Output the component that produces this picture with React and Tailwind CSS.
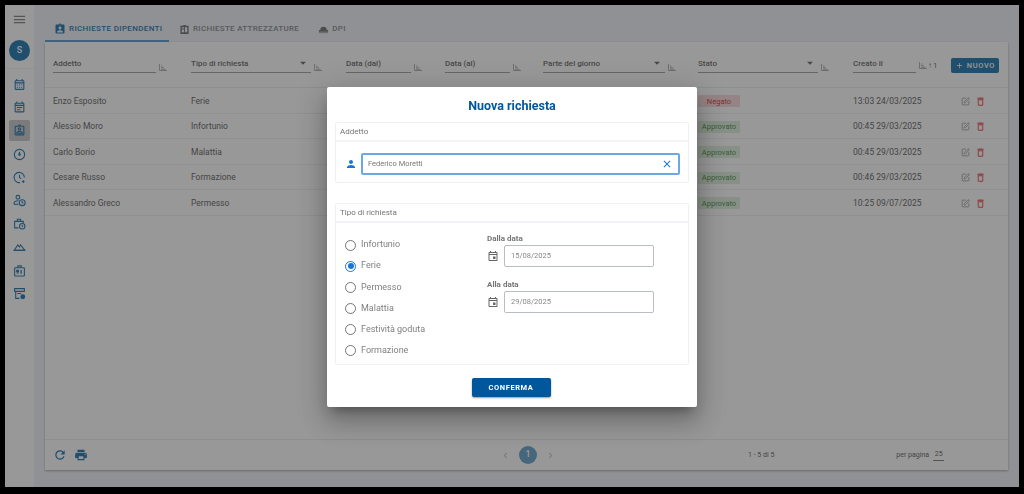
import {
  MdMenu, MdAssignmentInd, MdOutlineCalendarMonth, MdOutlineEventNote,
  MdOutlineAssignmentInd, MdAdd, MdOutlineDelete, MdRefresh, MdPrint, MdPerson,
  MdClose, MdOutlineEvent, MdChevronLeft, MdChevronRight, MdArrowDropDown,
} from 'react-icons/md';
import { SquarePen } from 'lucide-react';

const rows = [
  { name: 'Enzo Esposito', type: 'Ferie', state: 'Negato', created: '13:03 24/03/2025' },
  { name: 'Alessio Moro', type: 'Infortunio', state: 'Approvato', created: '00:45 29/03/2025' },
  { name: 'Carlo Borio', type: 'Malattia', state: 'Approvato', created: '00:45 29/03/2025' },
  { name: 'Cesare Russo', type: 'Formazione', state: 'Approvato', created: '00:46 29/03/2025' },
  { name: 'Alessandro Greco', type: 'Permesso', state: 'Approvato', created: '10:25 09/07/2025' },
];

const radios = ['Infortunio', 'Ferie', 'Permesso', 'Malattia', 'Festività goduta', 'Formazione'];

const SortIcon = () => (
  <svg width="8" height="8" viewBox="0 0 8 8" className="shrink-0 text-[#8a8a8a] mb-[2px]">
    <path d="M0.5 1v6.5H8M2 3h1.5M2 4.7h3M2 6.3h4.5" stroke="currentColor" strokeWidth="0.7" fill="none" />
  </svg>
);

// sidebar icons that the packages don't have in this form
const Svg = ({ className, children }) => (
  <svg viewBox="0 0 24 24" fill="none" stroke="currentColor" strokeWidth="2" className={className}>{children}</svg>
);
const ClockDot = (p) => <Svg {...p}><circle cx="12" cy="12" r="9.5" /><path d="M12 7v5" /><circle cx="12" cy="12" r="1.5" fill="currentColor" /></Svg>;
const ClockPlus = (p) => <Svg {...p}><path d="M21 12a9.5 9.5 0 1 0-8 9.4" /><path d="M12 7v5l3 2M19 17v5M16.5 19.5h5" /></Svg>;
const PersonClock = (p) => <Svg {...p}><circle cx="9" cy="6" r="3.5" /><path d="M2 19v-2c0-3 4-4.5 8-4.5" /><path d="M2 19h8" /><circle cx="17" cy="16" r="5.5" /><path d="M17 13v3l2 1" /></Svg>;
const CaseClock = (p) => <Svg {...p}><path d="M10 20H3V8h16v3M8 8V4h6v4" /><circle cx="17" cy="17" r="5" /><path d="M17 14.5V17l1.5 1" /></Svg>;
const Hill = (p) => <Svg {...p}><path d="M2 19L9 9l3 4 2-4 8 10z" /><path d="M2 19h20" /></Svg>;
const BadgeBox = (p) => <Svg {...p}><rect x="3" y="7" width="18" height="15" rx="1" /><path d="M9 7V3.5h6V7" /><path d="M7 12h3v2H7zM7 17h3M15 11v7" strokeWidth="2.4" /></Svg>;
const ArchiveGear = (p) => <Svg {...p}><path d="M3 3h18v5H3zM5 8v13h7M8 12h7" /><circle cx="18" cy="18" r="3.5" fill="currentColor" /></Svg>;
const TabBox = ({ className }) => (
  <svg viewBox="0 0 24 24" className={className} fill="currentColor">
    <path d="M3 4h6V2h6v2h6v18H3zm3 3v3h5V7zm7 0v11h5V7zM6 12v6h5v-6z" fillRule="evenodd" />
  </svg>
);
const HardHat = ({ className }) => (
  <svg viewBox="0 0 24 24" className={className} fill="currentColor">
    <path d="M5 13a7 7 0 0 1 14 0h3v4H2v-4z" /><path d="M2 18h20v2H2z" opacity="0.7" />
  </svg>
);

const Filter = ({ label, width, select }) => (
  <div className="flex items-end gap-[3px]">
    <div className={`${width} h-[22px] border-b border-[#9a9a9a] flex items-end justify-between pb-[3px]`}>
      <span className="text-[8px] leading-[10px] font-medium text-[#5c5c5c]">{label}</span>
      {select && <MdArrowDropDown className="text-[14px] text-[#5c5c5c] mr-[1px] -mb-[1px]" />}
    </div>
    <SortIcon />
  </div>
);

const SideIcon = ({ icon: Icon, active }) => (
  <div className={`w-[21px] h-[21px] flex items-center justify-center rounded-[2px] ${active ? 'bg-[#c4c4c4]' : ''}`}>
    <Icon className="w-[13px] h-[13px] text-[#0f6aa8]" />
  </div>
);

const Section = ({ title, className, children }) => (
  <div className={`border border-[#eef0f3] rounded-[2px] ${className}`}>
    <div className="h-[19px] flex items-center px-[4px] border-b-2 border-[#f1f3f6] text-[8px] text-[#757575]">{title}</div>
    {children}
  </div>
);

const DateField = ({ label, value }) => (
  <div>
    <div className="text-[8px] font-bold text-[#757575] leading-[10px] mb-[1px]">{label}</div>
    <div className="flex items-center gap-[5px]">
      <MdOutlineEvent className="text-[14px] text-[#666] w-[12px]" />
      <div className="w-[150px] h-[22px] border border-[#b9bec5] rounded-[2px] flex items-center px-[6px] text-[7.5px] text-[#888]">{value}</div>
    </div>
  </div>
);

export default function App() {
  return (
    <div className="w-[1024px] h-[494px] bg-black pl-[5px] pt-[5px] pr-[5px] pb-[7px] overflow-hidden" style={{ fontFamily: 'Roboto, sans-serif' }}>
      <div className="relative flex h-full bg-white overflow-hidden">
        {/* Sidebar */}
        <aside className="w-[29px] shrink-0 bg-white flex flex-col items-center">
          <MdMenu className="text-[15px] text-[#777] mt-[7px]" />
          <div className="w-[21px] h-[21px] rounded-full bg-[#0f6aa8] text-white text-[9px] font-medium flex items-center justify-center mt-[13px] shrink-0">S</div>
          <div className="w-full border-t border-[#eee] mt-[7px]" />
          <div className="flex flex-col items-center gap-[2.2px] mt-[5px]">
            <SideIcon icon={MdOutlineCalendarMonth} />
            <SideIcon icon={MdOutlineEventNote} />
            <SideIcon icon={MdOutlineAssignmentInd} active />
            <SideIcon icon={ClockDot} />
            <SideIcon icon={ClockPlus} />
            <SideIcon icon={PersonClock} />
            <SideIcon icon={CaseClock} />
            <SideIcon icon={Hill} />
            <SideIcon icon={BadgeBox} />
            <SideIcon icon={ArchiveGear} />
          </div>
        </aside>

        {/* Main */}
        <main className="flex-1 min-w-0 bg-[#eef1f7] pl-[11px] pr-[11px] pb-[17px] flex flex-col">
          <div className="h-[37px] shrink-0 flex items-end">
            <div className="w-[124px] h-[37px] border-b-2 border-[#4f93cf] flex items-center pl-[9px] gap-[3px] pt-[13px]">
              <MdAssignmentInd className="text-[12px] text-[#0f6aa8]" />
              <span className="text-[8px] font-medium tracking-[0.35px] text-[#0f6aa8]">RICHIESTE DIPENDENTI</span>
            </div>
            <div className="h-[37px] flex items-center gap-[3px] ml-[10px] pt-[13px] pb-[2px]">
              <TabBox className="w-[11px] h-[11px] text-[#666]" />
              <span className="text-[8px] font-medium tracking-[0.3px] text-[#808080]">RICHIESTE ATTREZZATURE</span>
            </div>
            <div className="h-[37px] flex items-center gap-[3px] ml-[19px] pt-[13px] pb-[2px]">
              <HardHat className="w-[11px] h-[11px] text-[#666]" />
              <span className="text-[8px] font-medium tracking-[0.35px] text-[#808080]">DPI</span>
            </div>
          </div>

          <div className="flex-1 min-h-0 bg-white shadow-[0_1px_2px_rgba(0,0,0,0.35)] flex flex-col">
            {/* Filters */}
            <div className="h-[46px] shrink-0 border-b border-[#eaeaea] flex items-start pt-[9px] pl-[8px]">
              <div className="w-[138px]"><Filter label="Addetto" width="w-[103px]" /></div>
              <div className="w-[155px]"><Filter label="Tipo di richiesta" width="w-[120px]" select /></div>
              <div className="w-[99px]"><Filter label="Data (dal)" width="w-[65px]" /></div>
              <div className="w-[98px]"><Filter label="Data (al)" width="w-[65px]" /></div>
              <div className="w-[155px]"><Filter label="Parte del giorno" width="w-[122px]" select /></div>
              <div className="w-[155px]"><Filter label="Stato" width="w-[120px]" select /></div>
              <div className="flex items-end gap-[3px] w-[98px]">
                <div className="w-[63px] h-[22px] border-b border-[#9a9a9a] flex items-end pb-[3px]">
                  <span className="text-[8px] leading-[10px] font-medium text-[#5c5c5c]">Creato il</span>
                </div>
                <span className="flex items-center gap-[1px] text-[8px] text-[#666] mb-[1px]">
                  <SortIcon /><span className="text-[8px] leading-[8px]">↑</span>1
                </span>
              </div>
              <button className="w-[48px] h-[15px] bg-[#0f6aa8] rounded-[2px] text-white text-[7.5px] font-medium tracking-[0.6px] flex items-center justify-center gap-[3px] mt-[7px]">
                <MdAdd className="text-[9px]" />NUOVO
              </button>
            </div>

            {/* Rows */}
            {rows.map((r) => (
              <div key={r.name} className="h-[25.5px] shrink-0 border-b border-[#eeeeee] flex items-center pl-[8px] pt-[2px] text-[8.5px] text-[#555]">
                <div className="w-[138px]">{r.name}</div>
                <div className="w-[507px]">{r.type}</div>
                <div className="w-[155px]">
                  <span className={`w-[42px] h-[12px] rounded-[1px] flex items-center justify-center text-[7.5px] ${r.state === 'Negato' ? 'bg-[#f8d7da] text-[#d32f2f]' : 'bg-[#dcefdc] text-[#3d8b40]'}`}>{r.state}</span>
                </div>
                <div className="w-[108px]">{r.created}</div>
                <div className="flex items-center gap-[5px]">
                  <SquarePen className="w-[9px] h-[9px] text-[#888]" />
                  <MdOutlineDelete className="text-[11px] text-[#e53935]" />
                </div>
              </div>
            ))}

            {/* Footer */}
            <div className="mt-auto h-[31px] shrink-0 border-t border-[#eaeaea] flex items-center pl-[8px] text-[7px] text-[#555]">
              <MdRefresh className="text-[14px] text-[#0f6aa8]" />
              <MdPrint className="text-[14px] text-[#0f6aa8] ml-[7px]" />
              <div className="flex items-center ml-[412px]">
                <MdChevronLeft className="text-[11px] text-[#bbb]" />
                <span className="w-[18px] h-[18px] rounded-full bg-[#5a9ac7] text-white text-[9px] font-medium flex items-center justify-center mx-[8px]">1</span>
                <MdChevronRight className="text-[11px] text-[#bbb]" />
              </div>
              <span className="ml-[192px]">1 - 5 di 5</span>
              <span className="ml-[122px]">per pagina</span>
              <span className="ml-[4px] w-[11px] border-b border-[#777] text-center">25</span>
            </div>
          </div>
        </main>

        {/* Backdrop + modal */}
        <div className="absolute inset-0 flex items-start justify-center pt-[82px] bg-[rgba(50,50,50,0.5)] backdrop-blur-[0.5px]">
          <div className="w-[370px] h-[320px] bg-white rounded-[2px] px-[8px] shadow-[0_8px_10px_-5px_rgba(0,0,0,0.3),0_16px_24px_2px_rgba(0,0,0,0.16),0_6px_30px_5px_rgba(0,0,0,0.14)] flex flex-col">
            <h2 className="h-[35px] shrink-0 flex items-center justify-center pt-[3px] text-[12.5px] font-bold text-[#01579b]">Nuova richiesta</h2>
            <Section title="Addetto" className="h-[61px] shrink-0">
              <div className="flex items-center pl-[9px] pr-[8px] pt-[11px]">
                <MdPerson className="text-[12px] text-[#1976d2]" />
                <div className="ml-[4px] flex-1 h-[22px] border-2 border-[#6aa8e8] rounded-[2px] flex items-center justify-between pl-[5px] pr-[5px] text-[7.5px] text-[#777]">
                  Federico Moretti
                  <MdClose className="text-[12px] text-[#1976d2]" />
                </div>
              </div>
            </Section>
            <Section title="Tipo di richiesta" className="h-[162px] shrink-0 mt-[20px]">
              <div className="flex pl-[9px] pt-[11px]">
                <div className="w-[142px] flex flex-col gap-[7.2px] pt-[4px]">
                  {radios.map((r) => (
                    <label key={r} className="flex items-center gap-[5px] h-[14px] text-[9px] text-[#808080]">
                      <span className={`w-[11px] h-[11px] rounded-full border flex items-center justify-center ${r === 'Ferie' ? 'border-[#1976d2]' : 'border-[#757575]'}`}>
                        {r === 'Ferie' && <span className="w-[6px] h-[6px] rounded-full bg-[#1976d2]" />}
                      </span>
                      {r}
                    </label>
                  ))}
                </div>
                <div className="flex flex-col gap-[13px]">
                  <DateField label="Dalla data" value="15/08/2025" />
                  <DateField label="Alla data" value="29/08/2025" />
                </div>
              </div>
            </Section>
            <button className="w-[79px] h-[19px] self-center mt-[13px] mr-[2px] bg-[#01579b] rounded-[2px] text-white text-[7.5px] font-bold tracking-[0.6px] shadow-[0_1px_2px_rgba(0,0,0,0.4)]">CONFERMA</button>
          </div>
        </div>
      </div>
    </div>
  );
}
